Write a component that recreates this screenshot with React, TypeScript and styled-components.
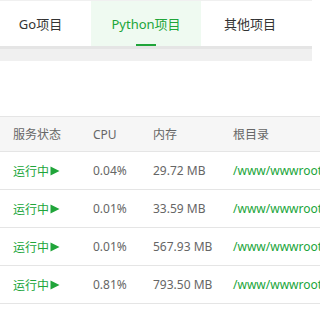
import styled, { createGlobalStyle } from "styled-components";

const GlobalStyle = createGlobalStyle`
  html, body {
    margin: 0;
    padding: 0;
    background: #ffffff;
    overflow: hidden;
  }
  body {
    font-family: "Noto Sans", "Noto Sans CJK SC", sans-serif;
  }
`;

const tabs = [
  { label: "Go项目", width: 81 },
  { label: "Python项目", width: 110, active: true },
  { label: "其他项目", width: 78 },
];

const rows = [
  { cpu: "0.04%", mem: "29.72 MB", path: "/www/wwwroot/flask_demo" },
  { cpu: "0.01%", mem: "33.59 MB", path: "/www/wwwroot/django_api" },
  { cpu: "0.01%", mem: "567.93 MB", path: "/www/wwwroot/spider" },
  { cpu: "0.81%", mem: "793.50 MB", path: "/www/wwwroot/fastapi_app" },
];

function PlayIcon() {
  return (
    <svg width="10" height="10" viewBox="0 0 10 10">
      <polygon points="0.5,0.5 9.5,5 0.5,9.5" fill="#20a53a" />
    </svg>
  );
}

export default function App() {
  return (
    <Page>
      <GlobalStyle />
      <TabBar>
        {tabs.map((t) => (
          <Tab key={t.label} $active={!!t.active} $width={t.width}>
            {t.label}
          </Tab>
        ))}
      </TabBar>
      <Spacer />
      <Table>
        <HeaderRow>
          <HeadCell>服务状态</HeadCell>
          <HeadCell>CPU</HeadCell>
          <HeadCell>内存</HeadCell>
          <HeadCell>根目录</HeadCell>
        </HeaderRow>
        {rows.map((r, i) => (
          <Row key={i}>
            <Status>
              运行中
              <PlayIcon />
            </Status>
            <Cell>{r.cpu}</Cell>
            <Cell>{r.mem}</Cell>
            <PathCell>{r.path}</PathCell>
          </Row>
        ))}
      </Table>
    </Page>
  );
}

const Page = styled.div`
  width: 312px;
  height: 321px;
  border-top: 1px solid #f0f0f0;
  box-sizing: border-box;
`;

const TabBar = styled.div`
  display: flex;
  gap: 10px;
  height: 45px;
  background: #ffffff;
  border-bottom: 3px solid #e5e5e5;
`;

const Tab = styled.div<{ $active: boolean; $width: number }>`
  position: relative;
  flex: 0 0 ${(p) => p.$width}px;
  display: flex;
  align-items: center;
  justify-content: center;
  font-size: 13px;
  color: ${(p) => (p.$active ? "#20a53a" : "#333333")};
  background: ${(p) => (p.$active ? "#effaf1" : "transparent")};
  white-space: nowrap;

  &::after {
    content: "";
    display: ${(p) => (p.$active ? "block" : "none")};
    position: absolute;
    left: 50%;
    bottom: 0;
    width: 20px;
    height: 2px;
    margin-left: -10px;
    background: #20a53a;
  }
`;

const Spacer = styled.div`
  height: 12px;
  background: #f0f0f0;
  margin-bottom: 55px;
`;

const Table = styled.div`
  width: 600px;
  border-top: 1px solid #e5e5e5;
`;

const HeaderRow = styled.div`
  display: grid;
  grid-template-columns: 80px 60px 80px 1fr;
  height: 34px;
  align-items: center;
  background: #f6f6f6;
  border-bottom: 1px solid #e5e5e5;
`;

const Row = styled(HeaderRow)`
  height: 37px;
  background: #ffffff;
`;

const HeadCell = styled.div`
  padding-left: 13px;
  font-size: 12px;
  color: #666666;
  white-space: nowrap;
`;

const Cell = styled(HeadCell)`
  color: #666666;
`;

const Status = styled(HeadCell)`
  display: flex;
  align-items: center;
  gap: 1px;
  color: #20a53a;
`;

const PathCell = styled(HeadCell)`
  color: #20a53a;
`;
